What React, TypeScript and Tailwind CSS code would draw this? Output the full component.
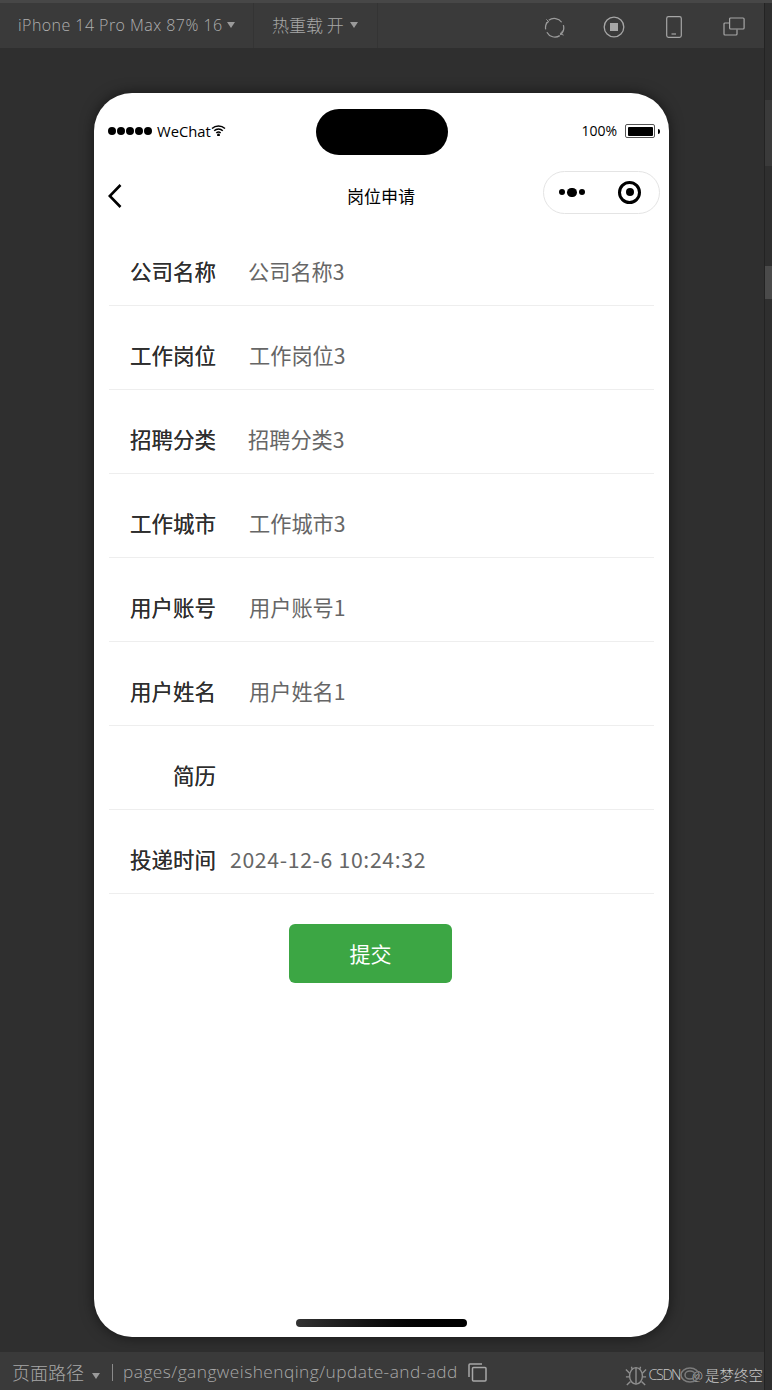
const cjk = "font-['Noto_Sans_CJK_SC','Noto_Sans',sans-serif]";
const latin = "font-['Open_Sans','Noto_Sans_CJK_SC',sans-serif] font-light";
const statusText = "font-['Open_Sans',sans-serif] font-normal leading-none text-black";

const fields = [
  { label: "公司名称", value: "公司名称3", valueClass: "ml-8" },
  { label: "工作岗位", value: "工作岗位3", valueClass: "ml-[33px]" },
  { label: "招聘分类", value: "招聘分类3", valueClass: "ml-8" },
  { label: "工作城市", value: "工作城市3", valueClass: "ml-[33px]" },
  { label: "用户账号", value: "用户账号1", valueClass: "ml-[33px]" },
  { label: "用户姓名", value: "用户姓名1", valueClass: "ml-[33px]" },
  { label: "简历", value: "", valueClass: "ml-8" },
  { label: "投递时间", value: "2024-12-6 10:24:32", valueClass: "ml-[14px] tracking-[0.67px]" },
];

const Caret = () => (
  <span className="inline-block h-0 w-0 border-x-[4.5px] border-t-[6px] border-x-transparent border-t-[#9a9a9a]" />
);

const ToolbarIcons = () => (
  <div className="flex items-center pt-[3px]">
    <div className="flex w-[60px] justify-center">
      <svg width="21" height="21" viewBox="0 0 22 22" fill="none" stroke="#9c9c9c" strokeWidth="1.3">
        <path d="M5 3.500A9.500 9.500 0 0 1 18.500 5.500" />
        <path d="M20.300 8.500A9.500 9.500 0 0 1 17 18.500" />
        <path d="M16.500 19.500A9.500 9.500 0 0 1 3 16" />
        <path d="M1.700 13A9.500 9.500 0 0 1 4 5" />
        <path d="M2.500 2.500 5 5 2 6.500M20 14l-3 3.500 3.500 1.500" strokeWidth="1" />
      </svg>
    </div>
    <div className="flex w-[60px] justify-center">
      <svg width="22" height="22" viewBox="0 0 22 22" fill="none" stroke="#a6a6a6" strokeWidth="1.3">
        <circle cx="11" cy="11" r="9.800" />
        <rect x="7" y="7" width="8" height="8" fill="#a6a6a6" stroke="none" />
      </svg>
    </div>
    <div className="flex w-[60px] justify-center">
      <svg width="16" height="22" viewBox="0 0 16 22" fill="none" stroke="#a6a6a6" strokeWidth="1.2">
        <rect x="0.700" y="0.700" width="14.600" height="20.600" rx="1.800" />
        <path d="M5.500 18h4.500" />
      </svg>
    </div>
    <div className="flex w-[60px] justify-center">
      <svg width="22" height="20" viewBox="0 0 22 20" fill="none" stroke="#a6a6a6" strokeWidth="1.2">
        <rect x="6.600" y="1" width="14.500" height="11" rx="1" />
        <path d="M6.600 6H2a1 1 0 0 0-1 1v10a1 1 0 0 0 1 1h11a1 1 0 0 0 1-1v-4.500" />
      </svg>
    </div>
  </div>
);

const StatusBar = () => (
  <div className="flex h-[62px] items-center pl-[14px] pr-[9px] pt-[14px]">
    <div className="flex w-[208px] items-center">
      <div className="flex gap-[1px]">
        {[0, 1, 2, 3, 4].map((i) => (
          <span key={i} className="h-[8px] w-[8px] rounded-full bg-black" />
        ))}
      </div>
      <span className={`ml-[5px] text-[14.800px] ${statusText}`}>WeChat</span>
      <svg width="15" height="11" viewBox="0 0 15 11" fill="none" stroke="#000" strokeWidth="1.500">
        <path d="M1 3.500a9.500 9.500 0 0 1 13 0" />
        <path d="M3.200 5.800a6.200 6.200 0 0 1 8.600 0" />
        <path d="M5.300 8a3.200 3.200 0 0 1 4.400 0" />
        <circle cx="7.500" cy="10" r="0.700" fill="#000" />
      </svg>
    </div>
    <div className="h-[46px] w-[132px] shrink-0 translate-y-[1px] rounded-[23px] bg-black" />
    <div className="ml-auto flex items-center">
      <span className={`text-[14px] ${statusText}`}>100%</span>
      <span className="ml-[8px] flex h-[14px] w-[30px] items-center rounded-[2px] border border-[#555] p-[1.500px]">
        <span className="h-full w-full rounded-[1px] bg-black" />
      </span>
      <span className="ml-[3px] h-[5px] w-[2px] rounded-r-full bg-black" />
    </div>
  </div>
);

const NavBar = () => (
  <div className="relative flex h-[72px] items-center pl-[14px] pr-[9px] pt-[2px]">
    <svg width="14" height="24" viewBox="0 0 14 24" fill="none" stroke="#000" strokeWidth="2.600" className="mt-[7px]">
      <path d="M12.500 1 1.800 12l10.700 11" />
    </svg>
    <span className={`absolute left-[253px] top-[29px] text-[17px] leading-[24px] text-black ${cjk}`}>岗位申请</span>
    <div className="ml-auto flex h-[43px] w-[117px] items-center rounded-full border border-[#e4e4e4] bg-white pl-[15px]">
      <div className="flex items-center gap-[2px]">
        <span className="h-[6px] w-[6px] rounded-full bg-black" />
        <span className="h-[9px] w-[10px] rounded-full bg-black" />
        <span className="h-[6px] w-[6px] rounded-full bg-black" />
      </div>
      <span className="ml-[33px] flex h-[23px] w-[23px] items-center justify-center rounded-full border-[3px] border-black">
        <span className="h-[8px] w-[8px] rounded-full bg-black" />
      </span>
    </div>
  </div>
);

const FieldRow = ({ label, value, valueClass }: (typeof fields)[number]) => (
  <div className="flex h-[84px] items-center border-b border-[#eeeeee] pt-[14px]">
    <span className="w-[107px] text-right text-[21.500px] leading-none text-[#2e2e2e] [text-shadow:0_0_0.5px_#444444]">{label}</span>
    {value && <span className={`${valueClass} text-[21.200px] leading-none text-[#666666]`}>{value}</span>}
  </div>
);

export default function App() {
  return (
    <div className={`flex h-[1390px] w-[772px] flex-col overflow-hidden bg-[#2f2f2f] ${cjk}`}>
      <div className="h-[3px] shrink-0 bg-[#474747]" />
      <div className="flex min-h-0 flex-1">
        <div className="flex w-[764px] shrink-0 flex-col">
          <header className="flex h-[45px] shrink-0 items-center justify-between bg-[#3a3a3a]">
            <div className="flex h-full items-center">
              <div className="flex h-full w-[254px] items-center gap-[4px] border-r border-[#343434] pb-[1px] pl-[18px]">
                <span className={`text-[16px] tracking-[0.45px] text-[#b0b0b0] ${latin}`}>iPhone 14 Pro Max 87% 16</span>
                <Caret />
              </div>
              <div className="flex h-full w-[124px] items-center gap-[6px] border-r border-[#343434] pb-[1px] pl-[18px]">
                <span className="text-[17px] font-light text-[#a8a8a8]">热重载 开</span>
                <Caret />
              </div>
            </div>
            <ToolbarIcons />
          </header>

          <main className="flex-1 pl-[94px] pt-[45px]">
            <div className="flex h-[1244px] w-[575px] flex-col overflow-hidden rounded-[38px] bg-white shadow-[0_0_14px_rgba(0,0,0,0.55)]">
              <StatusBar />
              <NavBar />
              <div className="ml-[15px] mt-[-5px] w-[545px]">
                {fields.map((f) => (
                  <FieldRow key={f.label} {...f} />
                ))}
              </div>
              <button className="ml-[195px] mt-[30px] flex h-[59px] w-[163px] items-center justify-center rounded-[6px] bg-[#3ca644] text-[21px] text-white">
                提交
              </button>
              <div className="mb-[10px] ml-[202px] mt-auto h-[8px] w-[171px] rounded-full bg-linear-to-r from-[#333333] to-black" />
            </div>
          </main>

          <footer className="relative flex h-[38px] shrink-0 items-center bg-[#3a3a3a] pl-[12px] pt-[2px] text-[#a8a8a8]">
            <span className="text-[18px] font-light">页面路径</span>
            <span className="ml-[8px]"><Caret /></span>
            <span className="ml-[12px] h-[17px] w-px bg-[#8a8a8a]" />
            <span className={`ml-[10px] text-[17.300px] tracking-[0.47px] ${latin}`}>pages/gangweishenqing/update-and-add</span>
            <svg width="19" height="19" viewBox="0 0 19 19" className="ml-[10px]" fill="none" stroke="#a8a8a8" strokeWidth="1.500">
              <rect x="4.500" y="4.500" width="13.500" height="13.500" rx="1" />
              <path d="M1 14V2a1 1 0 0 1 1-1h12" />
            </svg>
            <div className="absolute right-px top-[10px] flex items-center leading-[26px] text-[#c8c8c8]">
              <svg width="24" height="22" viewBox="0 0 24 24" fill="none" stroke="#8f8f8f" strokeWidth="1.500">
                <ellipse cx="12" cy="13" rx="7" ry="9" />
                <path d="M12 4v18M8 6l-1-3M16 6l1-3M1 6l4 4M23 6l-4 4M1 14h4M23 14h-4M2 23l4-4M22 23l-4-4" />
              </svg>
              <span className={`text-[14.500px] tracking-[-1.500px] ${latin}`}>CSDN</span>
              <span className="relative ml-[12px] mr-[2px] text-[12px] font-light">
                @
                <svg width="20" height="16" viewBox="0 0 20 16" fill="none" stroke="#7c7c7c" strokeWidth="1.500" className="absolute left-[-12px] top-[5px]">
                  <ellipse cx="10" cy="8" rx="9" ry="7" />
                  <ellipse cx="10" cy="8" rx="5" ry="4" />
                </svg>
              </span>
              <span className="text-[14.500px] font-light">是梦终空</span>
            </div>
          </footer>
        </div>

        <aside className="w-2 shrink-0 border-l border-[#232323] bg-[#2f2f2f]">
          <div className="mt-[97px] h-[66px] bg-[#3a3a3a]" />
          <div className="mt-[100px] h-[33px] bg-[#4a4a4a]" />
        </aside>
      </div>
    </div>
  );
}
